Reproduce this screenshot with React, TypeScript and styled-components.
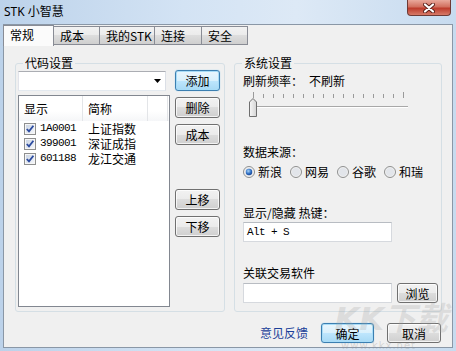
import React from 'react';
import styled, { createGlobalStyle, css } from 'styled-components';

const GlobalStyle = createGlobalStyle`
  html, body { margin: 0; padding: 0; background: #fff; }
  body {
    font-family: "Noto Sans CJK SC", "Noto Sans", sans-serif;
    font-size: 12px;
    color: #000;
  }
  * { box-sizing: border-box; }
`;

const Window = styled.div`
  position: relative;
  width: 456px;
  height: 351px;
  padding: 0 3px 3px 3px;
  background: linear-gradient(90deg, #bcd2ea 0%, #d3e3f4 40%, #dde9f6 65%, #c7dbef 100%);
  display: flex;
  flex-direction: column;
  overflow: hidden;
`;

const TitleBar = styled.div`
  height: 24px;
  flex: none;
  display: flex;
  align-items: flex-start;
  justify-content: space-between;
`;

const Title = styled.span`
  font-family: "Noto Sans", "Noto Sans CJK SC", sans-serif;
  font-size: 12px;
  line-height: 16px;
  margin: 4px 0 0 1px;
`;

const CloseButton = styled.div`
  width: 44px;
  height: 16px;
  margin-right: 2px;
  border: 1px solid #6e3a35;
  border-top: none;
  border-radius: 0 0 4px 4px;
  background: linear-gradient(#e9a99c 0%, #d2705f 45%, #bd3c2c 55%, #d77a68 100%);
  display: flex;
  align-items: center;
  justify-content: center;
`;

const Client = styled.div`
  flex: 1;
  border: 1px solid #8a97a6;
  background: #f0f0f0;
  display: flex;
  flex-direction: column;
`;

const TabRow = styled.div`
  height: 20px;
  flex: none;
  display: flex;
`;

const Tab = styled.div<{ $w: number; $active?: boolean }>`
  width: ${p => p.$w}px;
  margin-left: -1px;
  padding-left: 6px;
  border: 1px solid #898c95;
  line-height: 18px;
  font-size: 12px;
  white-space: nowrap;
  ${p =>
    p.$active
      ? css`
          background: #fbfbfb;
          border-bottom: none;
          height: 21px;
          position: relative;
          z-index: 1;
        `
      : css`
          margin-top: 1px;
          background: linear-gradient(#f2f2f2 0%, #ebebeb 50%, #dddddd 50%, #cfcfcf 100%);
        `}
`;

const Panel = styled.div`
  flex: 1;
  display: flex;
  flex-direction: column;
  padding: 11px 10px 0 11px;
`;

const Groups = styled.div`
  display: grid;
  grid-template-columns: 210px 208px;
  column-gap: 9px;
  height: 256px;
`;

const GroupBox = styled.fieldset`
  margin: 0;
  min-width: 0;
  border: 1px solid #d5dfe5;
  border-radius: 3px;
  padding: 0 3px 4px 2px;
`;

const Legend = styled.legend`
  margin-left: 5px;
  padding: 0 2px;
  font-size: 12px;
  line-height: 14px;
`;

const LeftBody = styled.div`
  display: grid;
  grid-template-columns: 152px 45px;
  column-gap: 5px;
`;

const LeftMain = styled.div`
  display: flex;
  flex-direction: column;
`;

const Combo = styled.div`
  width: 148px;
  height: 20px;
  margin-top: 1px;
  background: #fff;
  border: 1px solid #abadb3;
  border-color: #abadb3 #dbdfe6 #e3e9ef #e2e3ea;
  display: flex;
  align-items: center;
  justify-content: flex-end;
  padding-right: 4px;
`;

const ListView = styled.div`
  margin-top: 4px;
  height: 212px;
  background: #fff;
  border: 1px solid #828790;
  display: flex;
  flex-direction: column;
`;

const ListHeader = styled.div`
  display: grid;
  grid-template-columns: 64px 65px 20px;
  height: 25px;
  background: linear-gradient(#ffffff 0%, #ffffff 60%, #f5f6f8 100%);
`;

const HeaderCell = styled.div`
  padding-left: 5px;
  line-height: 25px;
  border-right: 1px solid #e3e5e8;
`;

const ListRow = styled.div`
  display: grid;
  grid-template-columns: 64px 65px 1fr;
  height: 15px;
  align-items: center;
`;

const CheckCell = styled.div`
  display: flex;
  align-items: center;
  gap: 4px;
  padding-left: 5px;
`;

const NameCell = styled.div`
  padding-left: 5px;
  line-height: 15px;
  white-space: nowrap;
`;

const Mono = styled.span`
  font-family: "Liberation Mono", "DejaVu Sans Mono", monospace;
  font-size: 11px;
  letter-spacing: -0.6px;
  line-height: 15px;
`;

const ButtonCol = styled.div`
  display: flex;
  flex-direction: column;
`;

const Button = styled.div<{ $w?: number; $primary?: boolean; $gap?: number }>`
  width: ${p => p.$w ?? 45}px;
  height: ${p => (p.$w ? 20 : 21)}px;
  margin-top: ${p => p.$gap ?? 0}px;
  flex: none;
  border: 1px solid #707070;
  border-radius: 3px;
  box-shadow: inset 0 0 0 1px rgba(255, 255, 255, 0.75);
  background: linear-gradient(#f2f2f2 0%, #ebebeb 50%, #dddddd 50%, #cfcfcf 100%);
  display: flex;
  align-items: center;
  justify-content: center;
  font-size: 12px;
  ${p =>
    p.$primary &&
    css`
      border-color: #3c7fb1;
      box-shadow: inset 0 0 0 1px #a8dcf7, 0 0 1px #6cc1ef;
      background: linear-gradient(#eaf6fd 0%, #d9f0fc 50%, #bee6fd 50%, #a7d9f5 100%);
    `}
`;

const RightBody = styled.div`
  display: flex;
  flex-direction: column;
  padding-left: 6px;
`;

const Label = styled.div<{ $gap: number }>`
  margin-top: ${p => p.$gap}px;
  line-height: 14px;
  white-space: nowrap;
`;

const RateValue = styled.span`
  margin-left: 6px;
`;

const SliderBox = styled.div`
  margin-top: 4px;
  height: 26px;
`;

const RadioRow = styled.div`
  margin-top: 6px;
  height: 14px;
  display: flex;
  gap: 8px;
`;

const RadioItem = styled.div`
  display: flex;
  align-items: center;
  gap: 3px;
  line-height: 14px;
`;

const Edit = styled.div<{ $gap: number }>`
  width: 149px;
  height: 20px;
  margin-top: ${p => p.$gap}px;
  background: #fff;
  border: 1px solid #d6d9de;
  border-top-color: #b8bcc2;
  padding-left: 3px;
  display: flex;
  align-items: center;
`;

const BrowseRow = styled.div`
  margin-top: 3px;
  display: flex;
  align-items: center;
  gap: 5px;
`;

const Footer = styled.div`
  margin-top: 11px;
  height: 20px;
  display: flex;
  align-items: center;
  justify-content: flex-end;
  gap: 13px;
  padding-right: 1px;
`;

const FeedbackLink = styled.span`
  color: #1b3f99;
  line-height: 14px;
`;

const Watermark = styled.div`
  position: absolute;
  right: 8px;
  bottom: 14px;
  font-family: "DejaVu Sans", "Noto Sans CJK SC", sans-serif;
  font-size: 32px;
  font-weight: bold;
  font-style: italic;
  line-height: 36px;
  color: rgba(160, 160, 160, 0.26);
  pointer-events: none;
`;

const WatermarkUrl = styled.div`
  position: absolute;
  right: 40px;
  bottom: 0;
  font-family: "DejaVu Sans", sans-serif;
  font-size: 10px;
  line-height: 11px;
  letter-spacing: 1px;
  color: rgba(150, 150, 150, 0.32);
  pointer-events: none;
`;

function CloseIcon() {
  return (
    <svg width="12" height="10" viewBox="0 0 12 10">
      <path d="M2 1.5 L10 8.5 M10 1.5 L2 8.5" stroke="#5a1f18" strokeWidth="4" strokeLinecap="round" />
      <path d="M2 1.5 L10 8.5 M10 1.5 L2 8.5" stroke="#ffffff" strokeWidth="2.2" strokeLinecap="round" />
    </svg>
  );
}

function ComboArrow() {
  return (
    <svg width="7" height="4" viewBox="0 0 7 4">
      <path d="M0 0 H7 L3.5 4 Z" fill="#000" />
    </svg>
  );
}

function CheckBox() {
  return (
    <svg width="12" height="12" viewBox="0 0 12 12">
      <defs>
        <linearGradient id="cbg" x1="0" y1="0" x2="1" y2="1">
          <stop offset="0" stopColor="#cbd5e4" />
          <stop offset="1" stopColor="#f4f6fa" />
        </linearGradient>
      </defs>
      <rect x="0.5" y="0.5" width="11" height="11" fill="#f6f6f6" stroke="#8e8f8f" />
      <rect x="2" y="2" width="8" height="8" fill="url(#cbg)" />
      <path d="M2.8 6 L5 8.4 L9.4 2.8" fill="none" stroke="#2c4b9f" strokeWidth="1.8" />
    </svg>
  );
}

function Radio({ checked }: { checked?: boolean }) {
  return (
    <svg width="12" height="12" viewBox="0 0 12 12">
      <defs>
        <radialGradient id="rdot" cx="0.4" cy="0.35" r="0.7">
          <stop offset="0" stopColor="#a9d4f7" />
          <stop offset="0.6" stopColor="#2f6fc4" />
          <stop offset="1" stopColor="#163f8c" />
        </radialGradient>
      </defs>
      <circle cx="6" cy="6" r="5.5" fill="#f1f1f1" stroke="#8e8f8f" />
      <circle cx="6" cy="6" r="4" fill="#e2e5ea" />
      {checked && <circle cx="6" cy="6" r="3.2" fill="url(#rdot)" />}
    </svg>
  );
}

function RateSlider() {
  const ticks = Array.from({ length: 16 }, (_, i) => 10 + i * 10);
  return (
    <svg width="172" height="26" viewBox="0 0 172 26">
      <defs>
        <linearGradient id="thumb" x1="0" y1="0" x2="1" y2="0">
          <stop offset="0" stopColor="#f7f7f7" />
          <stop offset="1" stopColor="#d4d4d4" />
        </linearGradient>
      </defs>
      {ticks.map((x, i) => (
        <line
          key={x}
          x1={x + 0.5}
          x2={x + 0.5}
          y1={i === 0 || i === ticks.length - 1 ? 0 : 2}
          y2={6}
          stroke="#9a9a9a"
        />
      ))}
      <line x1="7" x2="165" y1="14.5" y2="14.5" stroke="#a8a8a8" />
      <line x1="7" x2="165" y1="15.5" y2="15.5" stroke="#ffffff" />
      <path d="M6.5 10 L10 6.5 L13.5 10 V24.5 H6.5 Z" fill="url(#thumb)" stroke="#6f6f6f" />
    </svg>
  );
}

const stocks = [
  { code: '1A0001', name: '上证指数' },
  { code: '399001', name: '深证成指' },
  { code: '601188', name: '龙江交通' },
];

const tabs = [
  { label: '常规', w: 51 },
  { label: '成本', w: 47 },
  { label: '我的STK', w: 56 },
  { label: '连接', w: 48 },
  { label: '安全', w: 47 },
];

const sources = ['新浪', '网易', '谷歌', '和瑞'];

export default function App() {
  return (
    <>
      <GlobalStyle />
      <Window>
        <TitleBar>
          <Title>STK 小智慧</Title>
          <CloseButton>
            <CloseIcon />
          </CloseButton>
        </TitleBar>
        <Client>
          <TabRow>
            {tabs.map((t, i) => (
              <Tab key={t.label} $w={t.w} $active={i === 0}>
                {t.label}
              </Tab>
            ))}
          </TabRow>
          <Panel>
            <Groups>
              <GroupBox>
                <Legend>代码设置</Legend>
                <LeftBody>
                  <LeftMain>
                    <Combo>
                      <ComboArrow />
                    </Combo>
                    <ListView>
                      <ListHeader>
                        <HeaderCell>显示</HeaderCell>
                        <HeaderCell>简称</HeaderCell>
                        <HeaderCell />
                      </ListHeader>
                      {stocks.map(s => (
                        <ListRow key={s.code}>
                          <CheckCell>
                            <CheckBox />
                            <Mono>{s.code}</Mono>
                          </CheckCell>
                          <NameCell>{s.name}</NameCell>
                        </ListRow>
                      ))}
                    </ListView>
                  </LeftMain>
                  <ButtonCol>
                    <Button $primary>添加</Button>
                    <Button $gap={6}>删除</Button>
                    <Button $gap={6}>成本</Button>
                    <Button $gap={44}>上移</Button>
                    <Button $gap={6}>下移</Button>
                  </ButtonCol>
                </LeftBody>
              </GroupBox>
              <GroupBox>
                <Legend>系统设置</Legend>
                <RightBody>
                  <Label $gap={4}>
                    刷新频率：<RateValue>不刷新</RateValue>
                  </Label>
                  <SliderBox>
                    <RateSlider />
                  </SliderBox>
                  <Label $gap={27}>数据来源：</Label>
                  <RadioRow>
                    {sources.map((s, i) => (
                      <RadioItem key={s}>
                        <Radio checked={i === 0} />
                        {s}
                      </RadioItem>
                    ))}
                  </RadioRow>
                  <Label $gap={27}>显示/隐藏 热键：</Label>
                  <Edit $gap={2}>
                    <Mono>Alt + S</Mono>
                  </Edit>
                  <Label $gap={24}>关联交易软件</Label>
                  <BrowseRow>
                    <Edit $gap={0} />
                    <Button $w={41}>浏览</Button>
                  </BrowseRow>
                </RightBody>
              </GroupBox>
            </Groups>
            <Footer>
              <FeedbackLink>意见反馈</FeedbackLink>
              <Button $w={53} $primary>确定</Button>
              <Button $w={54}>取消</Button>
            </Footer>
          </Panel>
        </Client>
        <Watermark>KK下载</Watermark>
        <WatermarkUrl>www.kkx.net</WatermarkUrl>
      </Window>
    </>
  );
}
